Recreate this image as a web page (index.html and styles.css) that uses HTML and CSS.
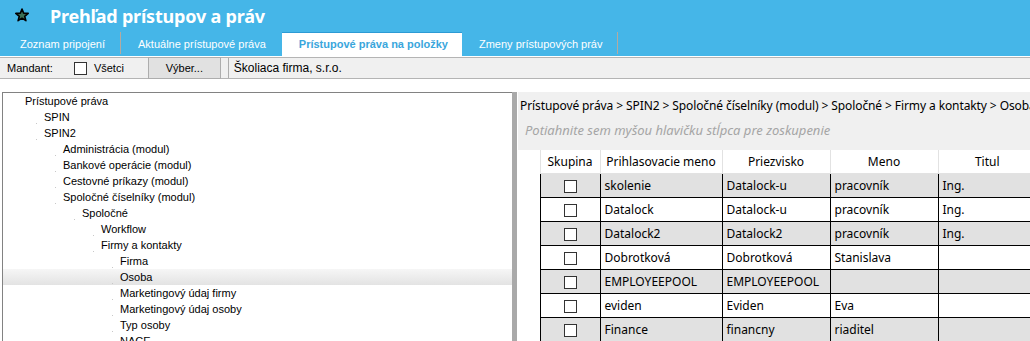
FILE: index.html
```html
<!DOCTYPE html>
<html lang="sk">
<head>
    <meta charset="UTF-8">
    <title>Prehľad prístupov a práv</title>
    <link rel="stylesheet" href="styles.css">
</head>
<body>
    <header class="app-header">
        <div class="title-row">
            <svg class="star" width="14" height="14" viewBox="0 0 14 14">
                <polygon points="7,1 8.7,5.2 13.2,5.4 9.7,8.3 10.9,12.7 7,10.2 3.1,12.7 4.3,8.3 0.8,5.4 5.3,5.2" fill="#3b6f55" stroke="#000" stroke-width="1.6" stroke-linejoin="round"/>
            </svg>
            <h1>Prehľad prístupov a práv</h1>
        </div>
        <nav class="tabs">
            <div class="tab sep">Zoznam pripojení</div>
            <div class="tab">Aktuálne prístupové práva</div>
            <div class="tab active">Prístupové práva na položky</div>
            <div class="tab sep">Zmeny prístupových práv</div>
        </nav>
    </header>

    <div class="toolbar">
        <span class="label">Mandant:</span>
        <label class="check"><span class="box"></span>Všetci</label>
        <button class="btn">Výber...</button>
        <div class="field">Školiaca firma, s.r.o.</div>
    </div>

    <main class="workspace">
        <section class="tree-panel">
            <ul class="tree">
                <li class="l0">Prístupové práva</li>
                <li class="l1">SPIN</li>
                <li class="l1">SPIN2</li>
                <li class="l2">Administrácia (modul)</li>
                <li class="l2">Bankové operácie (modul)</li>
                <li class="l2">Cestovné príkazy (modul)</li>
                <li class="l2">Spoločné číselníky (modul)</li>
                <li class="l3">Spoločné</li>
                <li class="l4">Workflow</li>
                <li class="l4">Firmy a kontakty</li>
                <li class="l5">Firma</li>
                <li class="l5 selected">Osoba</li>
                <li class="l5">Marketingový údaj firmy</li>
                <li class="l5">Marketingový údaj osoby</li>
                <li class="l5">Typ osoby</li>
                <li class="l5">NACE</li>
            </ul>
        </section>
        <div class="splitter"></div>
        <section class="detail-panel">
            <div class="group-area">
                <div class="breadcrumb">Prístupové práva &gt; SPIN2 &gt; Spoločné číselníky (modul) &gt; Spoločné &gt; Firmy a kontakty &gt; Osoba</div>
                <div class="group-hint">Potiahnite sem myšou hlavičku stĺpca pre zoskupenie</div>
            </div>
            <table class="grid">
                <colgroup>
                    <col class="c-ind"><col class="c-grp"><col class="c-login"><col class="c-sur"><col class="c-name"><col class="c-title">
                </colgroup>
                <thead>
                    <tr>
                        <th class="ind"></th>
                        <th>Skupina</th>
                        <th>Prihlasovacie meno</th>
                        <th>Priezvisko</th>
                        <th>Meno</th>
                        <th>Titul</th>
                    </tr>
                </thead>
                <tbody>
                    <tr class="odd"><td class="ind"></td><td class="cb"><span class="box"></span></td><td>skolenie</td><td>Datalock-u</td><td>pracovník</td><td>Ing.</td></tr>
                    <tr><td class="ind"></td><td class="cb"><span class="box"></span></td><td>Datalock</td><td>Datalock-u</td><td>pracovník</td><td>Ing.</td></tr>
                    <tr class="odd"><td class="ind"></td><td class="cb"><span class="box"></span></td><td>Datalock2</td><td>Datalock2</td><td>pracovník</td><td>Ing.</td></tr>
                    <tr><td class="ind"></td><td class="cb"><span class="box"></span></td><td>Dobrotková</td><td>Dobrotková</td><td>Stanislava</td><td></td></tr>
                    <tr class="odd"><td class="ind"></td><td class="cb"><span class="box"></span></td><td>EMPLOYEEPOOL</td><td>EMPLOYEEPOOL</td><td></td><td></td></tr>
                    <tr><td class="ind"></td><td class="cb"><span class="box"></span></td><td>eviden</td><td>Eviden</td><td>Eva</td><td></td></tr>
                    <tr class="odd"><td class="ind"></td><td class="cb"><span class="box"></span></td><td>Finance</td><td>financny</td><td>riaditel</td><td></td></tr>
                </tbody>
            </table>
        </section>
    </main>
</body>
</html>
```

FILE: styles.css
```css
html, body {
    margin: 0;
    padding: 0;
    height: 341px;
    overflow: hidden;
    background: #fff;
}
body {
    font-family: "Liberation Sans", Arial, sans-serif;
    font-size: 11px;
    color: #000;
}
.app-header {
    background: #45b6e8;
    height: 56px;
}
.title-row {
    height: 32px;
    display: flex;
    align-items: center;
}
.star {
    margin-left: 15px;
    margin-top: -2px;
}
.title-row h1 {
    margin: 0 0 0 21px;
    font-family: "Noto Sans", sans-serif;
    font-size: 18px;
    letter-spacing: -0.2px;
    font-weight: bold;
    color: #fff;
    line-height: 32px;
}
.tabs {
    display: flex;
    height: 24px;
    padding-left: 3px;
}
.tab {
    position: relative;
    padding: 0 16px 0 17px;
    line-height: 24px;
    color: #fff;
    font-size: 11px;
}
.tab.sep::after {
    content: "";
    position: absolute;
    right: 0;
    top: 0;
    bottom: 2px;
    width: 1px;
    background: #b4aaa0;
}
.tab.active {
    background: #fff;
    color: #3aa6dc;
    font-weight: bold;
    border-top: 1px solid #2c9ad4;
    line-height: 23px;
    padding: 0 14px 0 17px;
}

.toolbar {
    margin-top: 1px;
    height: 20px;
    border-top: 1px solid #b4b4b4;
    border-bottom: 1px solid #b4b4b4;
    background: #f0f0f0;
    display: flex;
    align-items: center;
}
.toolbar .label {
    margin-left: 7px;
}
.check {
    display: flex;
    align-items: center;
    margin-left: 21px;
}
.check .box {
    width: 11px;
    height: 11px;
    border: 1px solid #333;
    background: #fff;
    margin-right: 7px;
}
.btn {
    margin-left: 24px;
    width: 73px;
    height: 22px;
    border: 1px solid #adadad;
    background: #e1e1e1;
    font-family: "Liberation Sans", Arial, sans-serif;
    font-size: 11px;
    padding: 0;
    margin-top: -1px;
    margin-bottom: -1px;
}
.field {
    flex: 1;
    margin-left: 7px;
    height: 20px;
    line-height: 20px;
    border-left: 1px solid #adadad;
    padding-left: 5px;
    font-size: 12px;
}

.workspace {
    display: flex;
    margin-top: 13px;
    height: 249px;
}
.tree-panel {
    margin-left: 2px;
    width: 509px;
    border-top: 1px solid #828282;
    border-left: 1px solid #828282;
    overflow: hidden;
}
.tree {
    list-style: none;
    margin: 0;
    padding: 0;
}
.tree li {
    position: relative;
    height: 16px;
    line-height: 16px;
    white-space: nowrap;
}
.tree li::before {
    content: "";
    position: absolute;
    left: -11px;
    top: 14px;
    width: 1px;
    height: 1px;
    background: #c8c8c8;
}
.tree .l0::before { display: none; }
.tree .l0 { padding-left: 22px; }
.tree .l1 { padding-left: 41px; }
.tree .l2 { padding-left: 60px; }
.tree .l3 { padding-left: 79px; }
.tree .l4 { padding-left: 98px; }
.tree .l5 { padding-left: 117px; }
.tree .l1::before { left: 33px; }
.tree .l2::before { left: 52px; }
.tree .l3::before { left: 71px; }
.tree .l4::before { left: 90px; }
.tree .l5::before { left: 109px; }
.tree li.selected {
    background: linear-gradient(#f6f6f6, #e3e3e3);
}
.splitter {
    width: 5px;
    background: #a9a9a9;
}
.detail-panel {
    flex: 1;
    overflow: hidden;
    font-family: "Noto Sans", sans-serif;
    font-size: 12px;
}
.group-area {
    background: #f0f0f0;
    height: 58px;
    margin-left: 1px;
}
.breadcrumb {
    padding: 5px 0 0 2px;
    height: 20px;
    line-height: 18px;
    white-space: nowrap;
    letter-spacing: -0.1px;
}
.group-hint {
    padding: 4px 0 0 7px;
    font-size: 13px;
    font-style: italic;
    color: #a5a5a5;
    white-space: nowrap;
}
.grid {
    border-collapse: collapse;
    table-layout: fixed;
    width: 519px;
}
.c-ind { width: 23px; }
.c-grp { width: 60px; }
.c-login { width: 122px; }
.c-sur { width: 108px; }
.c-name { width: 108px; }
.c-title { width: 98px; }
.grid th {
    height: 23px;
    font-weight: normal;
    border-left: 1px solid #e2e2e2;
    border-bottom: 1px solid #e2e2e2;
    padding: 0;
    white-space: nowrap;
    overflow: hidden;
}
.grid th.ind {
    border-left: none;
    border-bottom: none;
}
.grid td {
    height: 23px;
    padding: 0 4px;
    border: 1px solid #000;
    white-space: nowrap;
    overflow: hidden;
}
.grid td.ind {
    border: none;
    background: #fff;
}
.grid tr.odd td {
    background: #e1e1e1;
}
.grid tr.odd td.ind {
    background: #fff;
}
.grid td.cb {
    text-align: center;
}
.grid td.cb .box {
    display: inline-block;
    width: 11px;
    height: 11px;
    border: 1px solid #333;
    background: #fff;
    vertical-align: middle;
}
```
